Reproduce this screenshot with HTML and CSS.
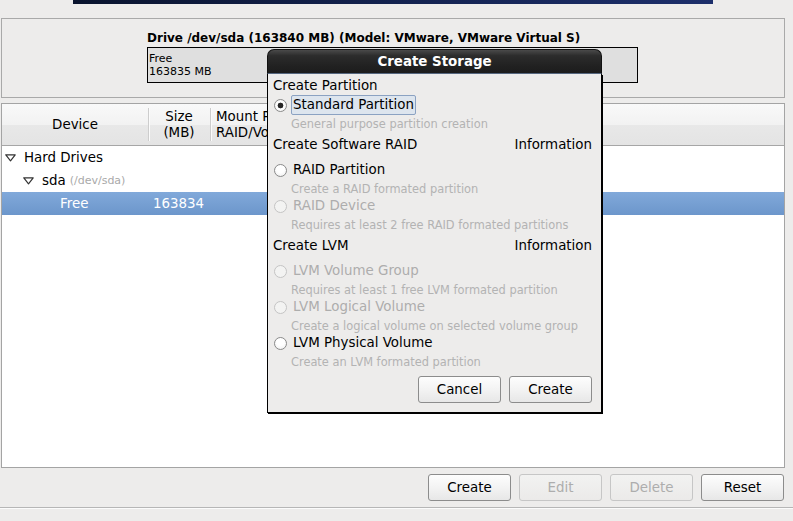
FILE: index.html
```html
<!DOCTYPE html>
<html>
<head>
<meta charset="utf-8">
<title>Create Storage</title>
<link rel="stylesheet" href="styles.css">
</head>
<body>
<div class="banner"></div>

<section class="drive-panel">
  <div class="drive-title">Drive /dev/sda (163840 MB) (Model: VMware, VMware Virtual S)</div>
  <div class="drive-bar">
    <div class="seg">Free<br>163835 MB</div>
  </div>
</section>

<section class="tree-panel">
  <div class="thead">
    <div class="th th-device">Device</div>
    <div class="th th-size">Size<br>(MB)</div>
    <div class="th th-mount">Mount Point/<br>RAID/Volume</div>
  </div>
  <div class="row">
    <div class="cell lvl0"><svg class="expander" width="11" height="8" viewBox="0 0 11 8"><polygon points="0.8,0.8 10.2,0.8 5.5,6.8" fill="none" stroke="#333" stroke-width="1.2" stroke-linejoin="round"/></svg>Hard Drives</div>
    <div class="cell"></div>
    <div class="cell"></div>
  </div>
  <div class="row">
    <div class="cell lvl1"><svg class="expander" width="11" height="8" viewBox="0 0 11 8"><polygon points="0.8,0.8 10.2,0.8 5.5,6.8" fill="none" stroke="#333" stroke-width="1.2" stroke-linejoin="round"/></svg>sda <span class="devpath">(/dev/sda)</span></div>
    <div class="cell"></div>
    <div class="cell"></div>
  </div>
  <div class="row selected">
    <div class="cell lvl2">Free</div>
    <div class="cell size">163834</div>
    <div class="cell"></div>
  </div>
</section>

<div class="actions">
  <button class="btn">Create</button>
  <button class="btn" disabled>Edit</button>
  <button class="btn" disabled>Delete</button>
  <button class="btn">Reset</button>
</div>
<div class="separator"></div>

<div class="dialog">
  <div class="dlg-title">Create Storage</div>
  <div class="dlg-body">
    <div class="grp-head first"><span>Create Partition</span></div>
    <div class="opt"><span class="radio checked"></span><span class="opt-label focus">Standard Partition</span></div>
    <div class="desc">General purpose partition creation</div>

    <div class="grp-head"><span>Create Software RAID</span><span>Information</span></div>
    <div class="opt"><span class="radio"></span><span class="opt-label">RAID Partition</span></div>
    <div class="desc">Create a RAID formated partition</div>
    <div class="opt disabled"><span class="radio"></span><span class="opt-label">RAID Device</span></div>
    <div class="desc">Requires at least 2 free RAID formated partitions</div>

    <div class="grp-head"><span>Create LVM</span><span>Information</span></div>
    <div class="opt disabled"><span class="radio"></span><span class="opt-label">LVM Volume Group</span></div>
    <div class="desc">Requires at least 1 free LVM formated partition</div>
    <div class="opt disabled"><span class="radio"></span><span class="opt-label">LVM Logical Volume</span></div>
    <div class="desc">Create a logical volume on selected volume group</div>
    <div class="opt"><span class="radio"></span><span class="opt-label">LVM Physical Volume</span></div>
    <div class="desc">Create an LVM formated partition</div>

    <div class="dlg-actions">
      <button class="btn">Cancel</button>
      <button class="btn">Create</button>
    </div>
  </div>
</div>
</body>
</html>
```

FILE: styles.css
```css
* {
  box-sizing: border-box;
}

html, body {
  margin: 0;
  padding: 0;
}

body {
  position: relative;
  width: 793px;
  height: 521px;
  overflow: hidden;
  background: #edeceb;
  font-family: "DejaVu Sans", "Noto Sans", sans-serif;
  font-size: 13.4px;
  color: #000;
}

.banner {
  margin-left: 73px;
  width: 640px;
  height: 4px;
  background: linear-gradient(90deg, #0a142e, #13224f 50%, #1d2f6b);
}

/* Drive panel */
.drive-panel {
  margin: 14px 0 0 1px;
  width: 784px;
  height: 80px;
  border: 1px solid #a9a9a9;
  padding: 11px 0 0 145px;
}

.drive-title {
  font-size: 12px;
  font-weight: bold;
  line-height: 16px;
  white-space: nowrap;
}

.drive-bar {
  margin-top: 1px;
  width: 491px;
  height: 36px;
  border: 1px solid #000;
  background: #dfdfdf;
  font-size: 11px;
  line-height: 13px;
  padding: 4px 0 0 1px;
}

/* Tree panel */
.tree-panel {
  margin: 5px 0 0 1px;
  width: 784px;
  height: 365px;
  border: 1px solid #a4a4a4;
  background: #fff;
  overflow: hidden;
}

.thead,
.row {
  display: grid;
  grid-template-columns: 146px 62px 1fr;
}

.thead {
  height: 42px;
  border-bottom: 1px solid #a6a6a6;
  background: linear-gradient(#f9f9f9, #f2f2f2 50%, #e8e8e8 51%, #e4e4e4);
}

.th {
  position: relative;
  display: flex;
  align-items: center;
  line-height: 16px;
  white-space: nowrap;
}

.th + .th::before {
  content: "";
  position: absolute;
  left: 0;
  top: 4px;
  bottom: 4px;
  width: 1px;
  background: #cdcdcd;
  box-shadow: 1px 0 0 #fbfbfb;
}

.th-device {
  justify-content: center;
}

.th-size {
  justify-content: center;
  text-align: center;
}

.th-mount {
  padding-left: 6px;
}

.row {
  height: 23px;
  line-height: 23px;
  white-space: nowrap;
}

.cell {
  display: flex;
  align-items: center;
}

.lvl0 {
  padding-left: 3px;
}

.lvl1 {
  padding-left: 21px;
}

.lvl2 {
  padding-left: 58px;
}

.expander {
  margin-right: 8px;
  flex: none;
}

.devpath {
  margin-left: 4px;
  font-size: 11px;
  color: #a9a9a9;
}

.row.selected {
  background: linear-gradient(#81a9da, #6c96cb);
  color: #fff;
}

.size {
  padding-left: 5px;
}

/* Buttons */
.btn {
  height: 27px;
  width: 83px;
  padding: 0;
  border: 1px solid #8c8c8c;
  border-radius: 3px;
  background: linear-gradient(#fdfdfd, #f3f3f3 50%, #e7e7e7);
  font-family: "DejaVu Sans", "Noto Sans", sans-serif;
  font-size: 13.4px;
  color: #000;
}

.btn:disabled {
  border-color: #c6c6c6;
  background: linear-gradient(#f2f2f1, #ebeae9);
  color: #adadad;
}

.actions {
  display: flex;
  justify-content: flex-end;
  gap: 8px;
  margin-top: 6px;
  padding-right: 9px;
}

.separator {
  margin-top: 6px;
  height: 2px;
  border-top: 1px solid #b6b6b6;
  border-bottom: 1px solid #fbfbfb;
}

/* Dialog */
.dialog {
  position: absolute;
  left: 267px;
  top: 49px;
  width: 335px;
}

.dlg-title {
  height: 25px;
  border-radius: 7px 7px 0 0;
  border: 1px solid #111;
  border-bottom: 1px solid #56677f;
  background: linear-gradient(#4a4a4a, #2c2c2c 25%, #212121 70%, #1c1c1c);
  color: #fff;
  font-weight: bold;
  text-align: center;
  line-height: 24px;
}

.dlg-body {
  border: 1px solid #000;
  border-top: 0;
  box-shadow: 1px 1px 0 #000;
  background: #edeceb;
  padding: 2px 9px 9px 5px;
}

.grp-head {
  display: flex;
  justify-content: space-between;
  height: 20px;
  line-height: 20px;
  margin: 3px 0 6px;
}

.grp-head.first {
  margin: 0;
}

.opt {
  display: flex;
  align-items: center;
  height: 18px;
  white-space: nowrap;
}

.radio {
  flex: none;
  width: 13px;
  height: 13px;
  margin: 0 4px 0 1px;
  border: 1px solid #8a8a8a;
  border-radius: 50%;
  background: radial-gradient(circle at 50% 35%, #ffffff 40%, #ececec);
}

.radio.checked {
  background: radial-gradient(circle, #262626 0 2.6px, #ffffff 3.2px 45%, #ececec);
}

.opt-label {
  line-height: 18px;
  padding: 0 1px;
  border: 1px solid transparent;
  border-radius: 2px;
}

.opt-label.focus {
  background: #dde5ee;
  border-color: #8ba2c2;
}

.opt.disabled .opt-label {
  color: #adadad;
}

.opt.disabled .radio {
  border-color: #c4c4c4;
  background: #f3f3f2;
}

.desc {
  height: 18px;
  padding: 2px 0 0 18px;
  line-height: 16px;
  font-size: 11.4px;
  color: #b3b3b3;
  white-space: nowrap;
}

.dlg-actions {
  display: flex;
  justify-content: flex-end;
  gap: 8px;
  margin-top: 6px;
}
```
